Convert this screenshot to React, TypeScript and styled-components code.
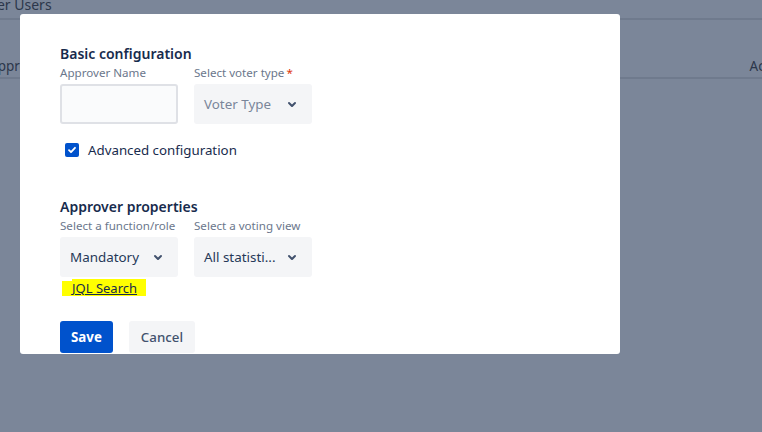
import React from 'react';
import styled, { createGlobalStyle } from 'styled-components';

const GlobalStyle = createGlobalStyle`
  html, body {
    margin: 0;
    padding: 0;
    background: #7b8699;
    overflow: hidden;
  }
  body {
    font-family: "Noto Sans", "Open Sans", "Liberation Sans", sans-serif;
  }
`;

const Page = styled.div`
  width: 762px;
  height: 432px;
  background: #7b8699;
  position: relative;
  overflow: hidden;
`;

const PageTitle = styled.div`
  margin-left: -50px;
  height: 18px;
  font-size: 14px;
  line-height: 10px;
  color: #2c374b;
  border-bottom: 2px solid #6f7a8d;
`;

const TableHead = styled.div`
  display: flex;
  justify-content: space-between;
  margin-top: 37px;
  height: 20px;
  font-size: 13.5px;
  color: #2c374b;
  border-bottom: 2px solid #6f7a8d;
  margin-left: -11px;
  margin-right: -34px;
`;

const Backdrop = styled.div`
  position: absolute;
  inset: 0;
`;

const Modal = styled.div`
  position: absolute;
  left: 20px;
  top: 14px;
  width: 600px;
  height: 340px;
  background: #fff;
  border-radius: 3px;
  overflow: hidden;
  box-sizing: border-box;
  padding: 30px 40px 0;
  color: #172b4d;
`;

const SectionTitle = styled.div<{ $gap?: number }>`
  font-size: 14px;
  font-weight: 600;
  line-height: 20px;
  color: #172b4d;
  margin-top: ${(p) => p.$gap ?? 0}px;
`;

const FieldRow = styled.div`
  display: flex;
  gap: 16px;
`;

const Field = styled.div`
  display: flex;
  flex-direction: column;
  width: 118px;
`;

const Label = styled.label`
  font-size: 11.6px;
  line-height: 16px;
  margin-top: 1px;
  color: #6b778c;
  white-space: nowrap;
`;

const Required = styled.span`
  color: #de350b;
  margin-left: 2px;
`;

const TextInput = styled.div`
  margin-top: 3px;
  height: 40px;
  box-sizing: border-box;
  border: 2px solid #dfe1e6;
  border-radius: 3px;
  background: #fafbfc;
`;

const Select = styled.div<{ $placeholder?: boolean }>`
  margin-top: 3px;
  height: 40px;
  box-sizing: border-box;
  border-radius: 3px;
  background: #f4f5f7;
  display: flex;
  align-items: center;
  justify-content: space-between;
  padding: 0 8px 0 10px;
  font-size: 13.4px;
  color: ${(p) => (p.$placeholder ? '#7a869a' : '#253858')};
  white-space: nowrap;
`;

const CheckRow = styled.label`
  display: flex;
  align-items: center;
  gap: 9px;
  margin-top: 16px;
  padding-left: 5px;
  height: 20px;
  font-size: 13.3px;
  color: #172b4d;
`;

const CheckBox = styled.span`
  width: 14px;
  height: 14px;
  border-radius: 2px;
  background: #0052cc;
  display: flex;
  align-items: center;
  justify-content: center;
`;

const Highlight = styled.mark`
  position: relative;
  display: inline-block;
  align-self: flex-start;
  margin: 2px 0 0 2px;
  padding: 0 9px 0 10px;
  height: 17px;
  line-height: 17px;
  background: #ffff00;
  font-size: 13px;
  &::before {
    content: '';
    position: absolute;
    left: 0;
    top: -1px;
    width: 10px;
    height: 3px;
    background: #fff;
  }
`;

const Link = styled.a`
  color: #172b4d;
  text-decoration: underline;
  position: relative;
  top: 1px;
`;

const Column = styled.div`
  display: flex;
  flex-direction: column;
`;

const Actions = styled.div`
  display: flex;
  gap: 16px;
  margin-top: 25px;
`;

const Button = styled.button<{ $primary?: boolean }>`
  height: 32px;
  border: none;
  border-radius: 3px;
  padding: 0 ${(p) => (p.$primary ? 11 : 12)}px;
  font-family: inherit;
  font-size: 13.3px;
  font-weight: ${(p) => (p.$primary ? 700 : 500)};
  background: ${(p) => (p.$primary ? '#0052cc' : '#f4f5f7')};
  color: ${(p) => (p.$primary ? '#fff' : '#42526e')};
`;

const Chevron = () => (
  <svg width="24" height="24" viewBox="0 0 24 24">
    <path
      fill="#42526e"
      d="M8.292 10.293a1.009 1.009 0 000 1.419l2.939 2.965c.218.215.5.322.779.322s.556-.107.769-.322l2.93-2.955a1.01 1.01 0 000-1.419.987.987 0 00-1.406 0l-2.298 2.317-2.307-2.327a.99.99 0 00-1.406 0z"
    />
  </svg>
);

const Tick = () => (
  <svg width="10" height="10" viewBox="0 0 10 10">
    <path d="M2 5.2l2 2 4-4.4" fill="none" stroke="#fff" strokeWidth="1.8" strokeLinecap="round" strokeLinejoin="round" />
  </svg>
);

export default function App() {
  return (
    <Page>
      <GlobalStyle />
      <PageTitle>Approver Users</PageTitle>
      <TableHead>
        <span>Approver</span>
        <span>Actions</span>
      </TableHead>
      <Backdrop>
        <Modal>
          <Column>
            <SectionTitle>Basic configuration</SectionTitle>
            <FieldRow>
              <Field>
                <Label>Approver Name</Label>
                <TextInput />
              </Field>
              <Field>
                <Label>
                  Select voter type<Required>*</Required>
                </Label>
                <Select $placeholder>
                  Voter Type
                  <Chevron />
                </Select>
              </Field>
            </FieldRow>
            <CheckRow>
              <CheckBox>
                <Tick />
              </CheckBox>
              Advanced configuration
            </CheckRow>
            <SectionTitle $gap={37}>Approver properties</SectionTitle>
            <FieldRow>
              <Field>
                <Label>Select a function/role</Label>
                <Select>
                  Mandatory
                  <Chevron />
                </Select>
              </Field>
              <Field>
                <Label>Select a voting view</Label>
                <Select>
                  All statisti...
                  <Chevron />
                </Select>
              </Field>
            </FieldRow>
            <Highlight>
              <Link href="#">JQL Search</Link>
            </Highlight>
            <Actions>
              <Button $primary>Save</Button>
              <Button>Cancel</Button>
            </Actions>
          </Column>
        </Modal>
      </Backdrop>
    </Page>
  );
}
